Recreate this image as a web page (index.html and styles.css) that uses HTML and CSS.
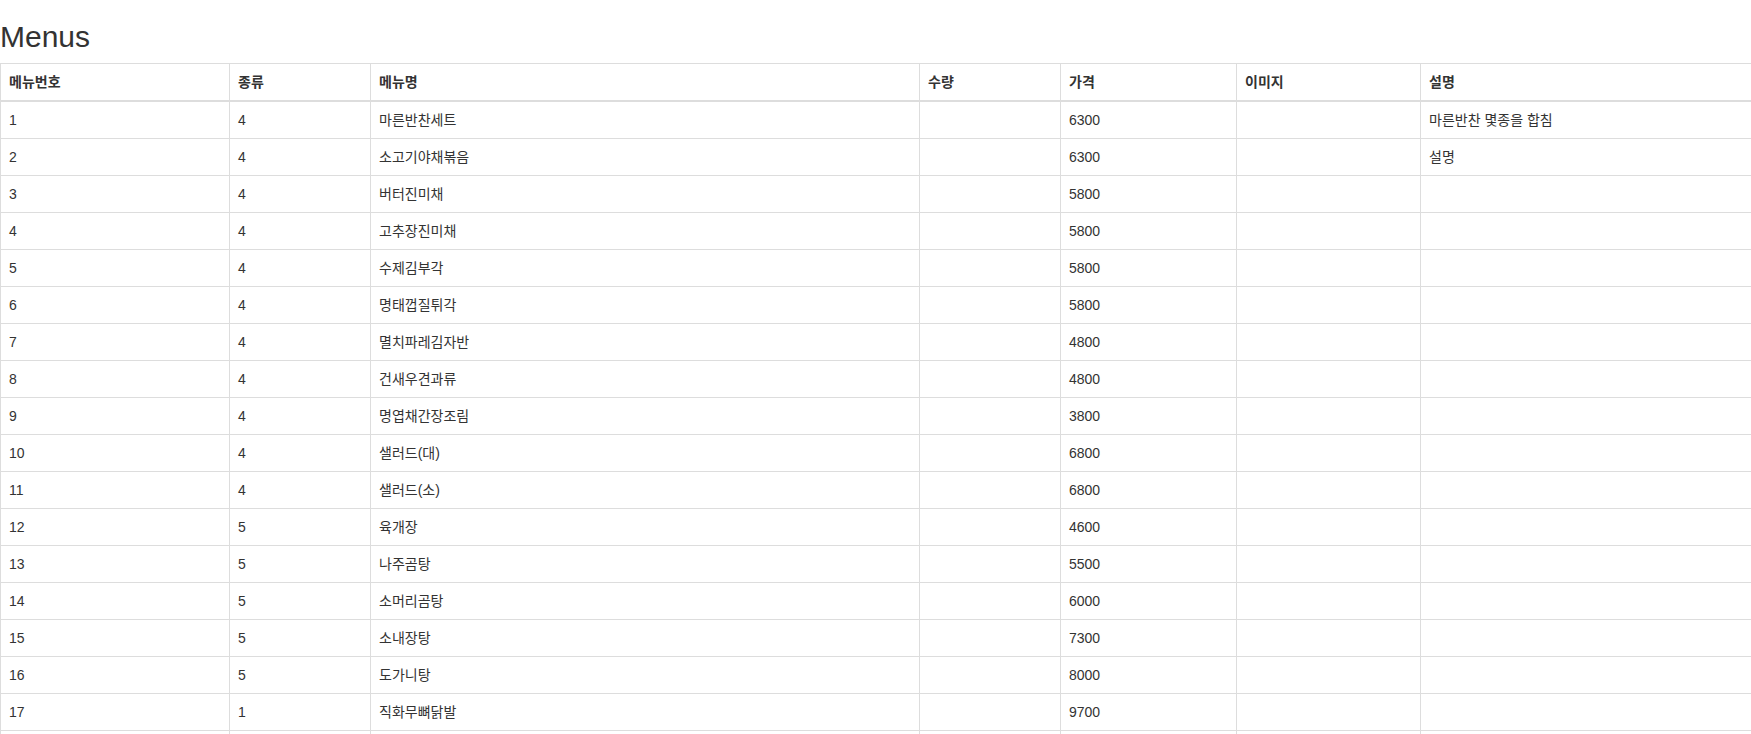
FILE: index.html
```html
<!DOCTYPE html>
<html lang="ko">
<head>
<meta charset="utf-8">
<title>Menus</title>
<link rel="stylesheet" href="styles.css">
</head>
<body>
<h2 class="title">Menus</h2>
<table class="table">
  <colgroup>
    <col class="c1"><col class="c2"><col class="c3"><col class="c4"><col class="c5"><col class="c6"><col class="c7">
  </colgroup>
  <thead>
    <tr><th>메뉴번호</th><th>종류</th><th>메뉴명</th><th>수량</th><th>가격</th><th>이미지</th><th>설명</th></tr>
  </thead>
  <tbody>
    <tr><td>1</td><td>4</td><td>마른반찬세트</td><td></td><td>6300</td><td></td><td>마른반찬 몇종을 합침</td></tr>
    <tr><td>2</td><td>4</td><td>소고기야채볶음</td><td></td><td>6300</td><td></td><td>설명</td></tr>
    <tr><td>3</td><td>4</td><td>버터진미채</td><td></td><td>5800</td><td></td><td></td></tr>
    <tr><td>4</td><td>4</td><td>고추장진미채</td><td></td><td>5800</td><td></td><td></td></tr>
    <tr><td>5</td><td>4</td><td>수제김부각</td><td></td><td>5800</td><td></td><td></td></tr>
    <tr><td>6</td><td>4</td><td>명태껍질튀각</td><td></td><td>5800</td><td></td><td></td></tr>
    <tr><td>7</td><td>4</td><td>멸치파레김자반</td><td></td><td>4800</td><td></td><td></td></tr>
    <tr><td>8</td><td>4</td><td>건새우견과류</td><td></td><td>4800</td><td></td><td></td></tr>
    <tr><td>9</td><td>4</td><td>명엽채간장조림</td><td></td><td>3800</td><td></td><td></td></tr>
    <tr><td>10</td><td>4</td><td>샐러드(대)</td><td></td><td>6800</td><td></td><td></td></tr>
    <tr><td>11</td><td>4</td><td>샐러드(소)</td><td></td><td>6800</td><td></td><td></td></tr>
    <tr><td>12</td><td>5</td><td>육개장</td><td></td><td>4600</td><td></td><td></td></tr>
    <tr><td>13</td><td>5</td><td>나주곰탕</td><td></td><td>5500</td><td></td><td></td></tr>
    <tr><td>14</td><td>5</td><td>소머리곰탕</td><td></td><td>6000</td><td></td><td></td></tr>
    <tr><td>15</td><td>5</td><td>소내장탕</td><td></td><td>7300</td><td></td><td></td></tr>
    <tr><td>16</td><td>5</td><td>도가니탕</td><td></td><td>8000</td><td></td><td></td></tr>
    <tr><td>17</td><td>1</td><td>직화무뼈닭발</td><td></td><td>9700</td><td></td><td></td></tr>
    <tr class="spacer"><td></td><td></td><td></td><td></td><td></td><td></td><td></td></tr>
  </tbody>
</table>
</body>
</html>
```
FILE: styles.css
```css
html, body {
  margin: 0;
  padding: 0;
  background: #fff;
}
body {
  font-family: "Liberation Sans", "Noto Sans CJK KR", sans-serif;
  font-size: 14px;
  line-height: 1.42857143;
  color: #333;
  overflow: hidden;
}
.title {
  font-family: "Liberation Sans", "Noto Sans CJK KR", sans-serif;
  font-size: 30px;
  font-weight: 500;
  line-height: 1.1;
  margin: 20px 0 10px;
  color: #333;
}
.table {
  width: 100%;
  table-layout: fixed;
  border-collapse: collapse;
  border-spacing: 0;
}
.c1 { width: 229px; }
.c2 { width: 141px; }
.c3 { width: 549px; }
.c4 { width: 141px; }
.c5 { width: 176px; }
.c6 { width: 184px; }
.table th,
.table td {
  padding: 8px;
  line-height: 20px;
  text-align: left;
  vertical-align: top;
  border: 1px solid #ddd;
  white-space: nowrap;
  overflow: hidden;
}
.table th {
  font-weight: bold;
  vertical-align: bottom;
  border-bottom: 2px solid #ddd;
}
.table .spacer td {
  height: 20px;
}
.table th:last-child,
.table td:last-child {
  border-right: 0;
}
```
